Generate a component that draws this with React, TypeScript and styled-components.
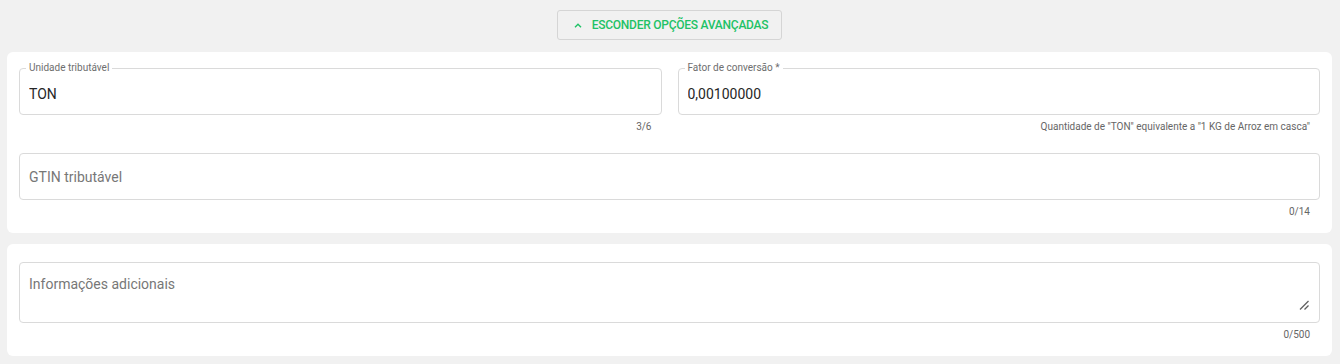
import React from "react";
import styled, { createGlobalStyle } from "styled-components";

const GlobalStyle = createGlobalStyle`
  body {
    margin: 0;
    background: #f1f1f1;
    font-family: Roboto, "Liberation Sans", Arial, sans-serif;
  }
  * {
    box-sizing: border-box;
  }
`;

const Field = ({
  label,
  value,
  placeholder,
  helper,
}: {
  label?: string;
  value?: string;
  placeholder?: string;
  helper: string;
}) => {
  return (
    <FieldBlock>
      <Outline>
        {label && <Label>{label}</Label>}
        <Input
          $labeled={!!label}
          defaultValue={value}
          placeholder={placeholder}
        />
      </Outline>
      <Helper>{helper}</Helper>
    </FieldBlock>
  );
};

const App = () => {
  return (
    <Page>
      <GlobalStyle />
      <Toolbar>
        <ToggleButton>
          <svg width="8" height="5" viewBox="0 0 8 5">
            <polyline
              points="1,4.2 4,1.2 7,4.2"
              fill="none"
              stroke="#1ec266"
              strokeWidth="1.4"
            />
          </svg>
          Esconder opções avançadas
        </ToggleButton>
      </Toolbar>

      <Card $top={16}>
        <Row>
          <Field label="Unidade tributável" value="TON" helper="3/6" />
          <Field
            label="Fator de conversão *"
            value="0,00100000"
            helper={'Quantidade de "TON" equivalente a "1 KG de Arroz em casca"'}
          />
        </Row>
        <Field placeholder="GTIN tributável" helper="0/14" />
      </Card>

      <Card $top={18}>
        <FieldBlock>
          <Outline $tall>
            <TextArea placeholder="Informações adicionais" />
            <Resizer width="10" height="10" viewBox="0 0 10 10">
              <line x1="1" y1="9.5" x2="9.5" y2="1" stroke="#5f5f5f" strokeWidth="1.2" />
              <line x1="5.5" y1="9.5" x2="9.5" y2="5.5" stroke="#5f5f5f" strokeWidth="1.2" />
            </Resizer>
          </Outline>
          <Helper>0/500</Helper>
        </FieldBlock>
      </Card>
    </Page>
  );
};

const Page = styled.div`
  display: flex;
  flex-direction: column;
  gap: 11px;
  padding: 10px 8px 9px 7px;
`;

const Toolbar = styled.div`
  display: flex;
  justify-content: center;
  margin-bottom: 1px;
`;

const ToggleButton = styled.button`
  display: flex;
  align-items: center;
  gap: 10px;
  height: 30px;
  padding: 0 13px 0 16px;
  background: #f1f1f1;
  border: 1px solid #d5d5d5;
  border-radius: 3px;
  color: #1ec266;
  font-family: Roboto, "Liberation Sans", Arial, sans-serif;
  font-size: 12px;
  font-weight: 500;
  letter-spacing: -0.25px;
  text-transform: uppercase;
  cursor: pointer;
`;

const Card = styled.div<{ $top: number }>`
  display: flex;
  flex-direction: column;
  gap: 20px;
  background: #ffffff;
  border-radius: 6px;
  padding: ${(p) => p.$top}px 12px 15px;
`;

const Row = styled.div`
  display: grid;
  grid-template-columns: 1fr 1fr;
  gap: 16px;
`;

const FieldBlock = styled.div`
  display: flex;
  flex-direction: column;
`;

const Outline = styled.div<{ $tall?: boolean }>`
  position: relative;
  height: ${(p) => (p.$tall ? 61 : 47)}px;
  border: 1px solid #dadada;
  border-radius: 4px;
  background: #ffffff;
`;

const Label = styled.span`
  position: absolute;
  top: -7px;
  left: 6px;
  padding: 0 3px;
  background: #ffffff;
  color: #6e6e6e;
  font-size: 10px;
  line-height: 12px;
`;

const Input = styled.input<{ $labeled: boolean }>`
  width: 100%;
  height: 100%;
  border: none;
  outline: none;
  background: transparent;
  padding: ${(p) => (p.$labeled ? "5px" : "0")} 9px 0;
  font-family: Roboto, "Liberation Sans", Arial, sans-serif;
  font-size: 14px;
  color: #262626;

  &::placeholder {
    color: #777777;
  }
`;

const TextArea = styled.textarea`
  display: block;
  width: 100%;
  height: 100%;
  border: none;
  outline: none;
  resize: none;
  background: transparent;
  padding: 11px 9px;
  font-family: Roboto, "Liberation Sans", Arial, sans-serif;
  font-size: 14px;
  line-height: 20px;
  color: #262626;

  &::placeholder {
    color: #777777;
  }
`;

const Resizer = styled.svg`
  position: absolute;
  right: 10px;
  bottom: 12px;
`;

const Helper = styled.div`
  margin-top: 6px;
  padding-right: 10px;
  text-align: right;
  color: #666666;
  font-size: 10px;
  line-height: 12px;
`;

export default App;
